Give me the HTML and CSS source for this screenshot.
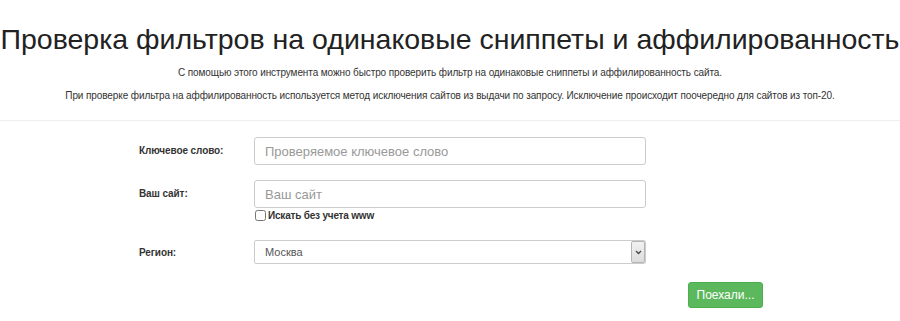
FILE: index.html
```html
<!DOCTYPE html>
<html lang="ru">
<head>
    <meta charset="UTF-8">
    <meta name="viewport" content="width=device-width, initial-scale=1.0">
    <title>Проверка фильтров</title>
    <link rel="stylesheet" href="styles.css">
</head>
<body>
<div class="header">
    <h1>Проверка фильтров на одинаковые сниппеты и аффилированность</h1>
    <p>С помощью этого инструмента можно быстро проверить фильтр на одинаковые сниппеты и аффилированность сайта.</p>
    <p>При проверке фильтра на аффилированность используется метод исключения сайтов из выдачи по запросу. Исключение происходит поочередно для сайтов из топ-20.</p>
</div>

<form class="check-form">
    <div class="form-row">
        <label class="form-label" for="keyword">Ключевое слово:</label>
        <input class="form-input" type="text" id="keyword" placeholder="Проверяемое ключевое слово">
    </div>
    <div class="form-row">
        <label class="form-label" for="site">Ваш сайт:</label>
        <div class="field">
            <input class="form-input" type="text" id="site" placeholder="Ваш сайт">
            <label class="check"><input type="checkbox"><span>Искать без учета www</span></label>
        </div>
    </div>
    <div class="form-row region-row">
        <label class="form-label" for="region">Регион:</label>
        <div class="select-wrap">
            <select class="form-select" id="region">
                <option>Москва</option>
                <option>Санкт-Петербург</option>
            </select>
            <span class="select-arrow">
                <svg width="7" height="5" viewBox="0 0 7 5"><path d="M1 1 L3.5 3.5 L6 1" fill="none" stroke="#444" stroke-width="1.3"/></svg>
            </span>
        </div>
    </div>
    <div class="actions">
        <button type="button" class="btn-go">Поехали...</button>
    </div>
</form>
</body>
</html>
```

FILE: styles.css
```css
body {
    margin: 0;
    font-family: "Liberation Sans", Arial, sans-serif;
    color: #333;
    background-color: #fff;
}
.header {
    text-align: center;
    border-bottom: 1px solid #eee;
    padding-top: 22px;
    padding-bottom: 8px;
}
.header h1 {
    margin: 0 0 10px 0;
    font-size: 28.5px;
    font-weight: normal;
    line-height: 34px;
    color: #222;
    white-space: nowrap;
}
.header p {
    margin: 0 0 10px 0;
    font-size: 10px;
    letter-spacing: -0.1px;
    line-height: 13px;
}
.check-form {
    padding: 16px 0 0 139px;
}
.form-row {
    display: grid;
    grid-template-columns: 115px 392px;
    align-items: start;
    margin-bottom: 15px;
}
.form-label {
    font-size: 10px;
    letter-spacing: -0.1px;
    font-weight: bold;
    color: #333;
    padding-top: 8px;
}
.form-input {
    box-sizing: border-box;
    width: 392px;
    height: 28px;
    padding: 4px 10px;
    border: 1px solid #ccc;
    border-radius: 3px;
    font-family: "Liberation Sans", Arial, sans-serif;
    font-size: 13px;
    color: #555;
}
.form-input::placeholder {
    color: #999;
}
.check {
    display: flex;
    align-items: center;
    margin-top: 2px;
    font-size: 10px;
    letter-spacing: -0.2px;
    font-weight: bold;
    color: #333;
}
.check input {
    margin: 0 2px 0 1px;
    width: 11px;
    height: 11px;
}
.region-row {
    margin-top: 19px;
    margin-bottom: 18px;
}
.region-row .form-label {
    padding-top: 7px;
}
.select-wrap {
    position: relative;
    width: 392px;
}
.form-select {
    box-sizing: border-box;
    width: 392px;
    height: 24px;
    padding: 0 10px;
    border: 1px solid #ccc;
    border-radius: 2px;
    background: #fff;
    font-family: "Liberation Sans", Arial, sans-serif;
    font-size: 11px;
    color: #555;
    -webkit-appearance: none;
    appearance: none;
}
.select-arrow {
    position: absolute;
    right: 1px;
    top: 1px;
    width: 12px;
    height: 20px;
    border: 1px solid #b5b5b5;
    border-radius: 2px;
    background: linear-gradient(#f2f2f2, #dcdcdc);
    display: flex;
    align-items: center;
    justify-content: center;
    pointer-events: none;
}
.actions {
    padding-left: 549px;
}
.btn-go {
    width: 75px;
    height: 26px;
    border: 1px solid #4cae4c;
    border-radius: 3px;
    background-color: #5cb85c;
    color: #fff;
    font-family: "Liberation Sans", Arial, sans-serif;
    font-size: 12px;
    padding: 0;
}
```
